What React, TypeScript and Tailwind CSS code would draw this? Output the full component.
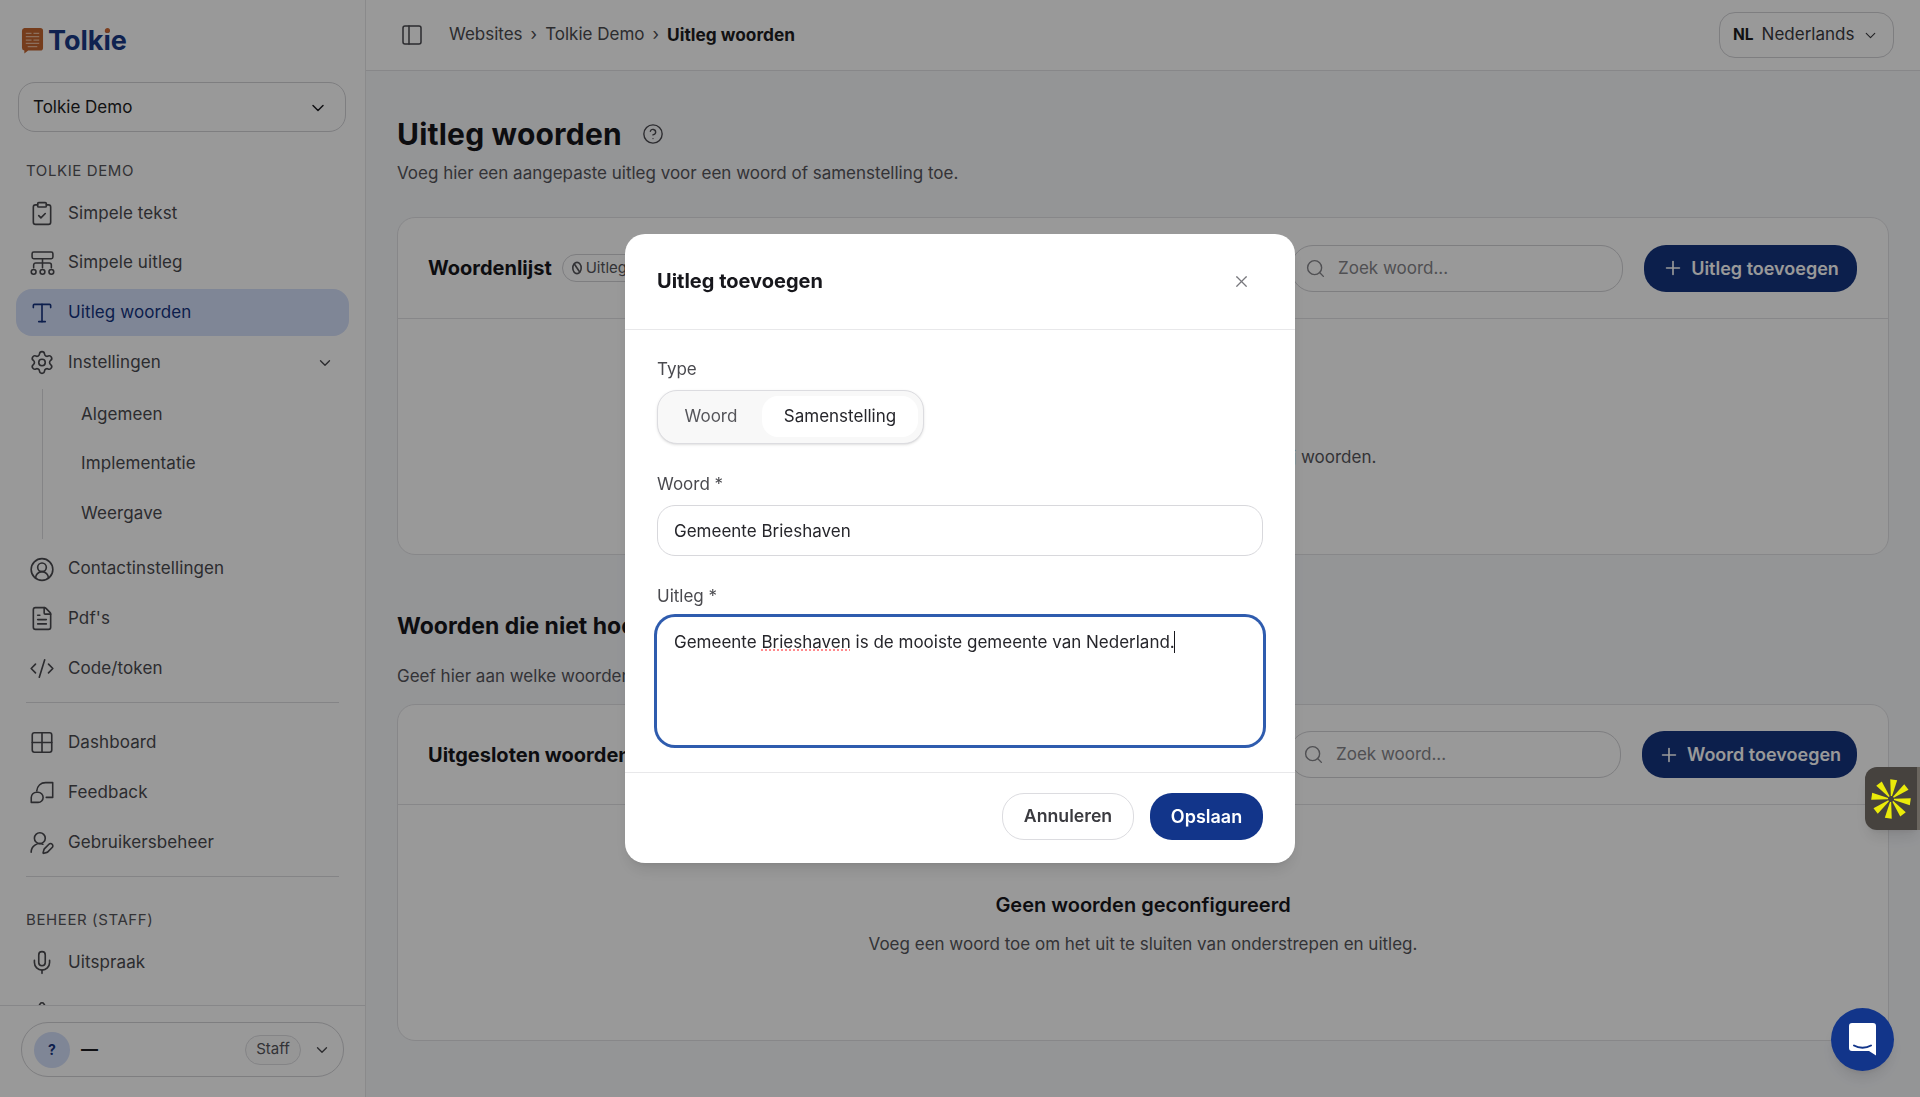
import React from "react";
import {
  ClipboardCheck, Type, Settings, ChevronDown, CircleUserRound, FileText, CodeXml, Grid2x2, UserRoundPen, Mic, PanelLeft, CircleHelp, Search, Plus, X, Triangle,
} from "lucide-react";

function Sitemap() {
  return (
    <svg width="25" height="25" viewBox="0 0 24 24" fill="none" stroke="currentColor" strokeWidth="1.5" strokeLinecap="round">
      <rect x="2" y="1" width="20" height="6.4" rx="1.6" />
      <path d="M12 7.5V16M3.5 16V13.5a2 2 0 0 1 2-2H18.5a2 2 0 0 1 2 2V16" />
      <circle cx="3.5" cy="20" r="2.3" />
      <circle cx="12" cy="20" r="2.3" />
      <circle cx="20.5" cy="20" r="2.3" />
    </svg>
  );
}

function Feedback() {
  return (
    <svg width="25" height="25" viewBox="0 0 24 24" fill="none" stroke="currentColor" strokeWidth="1.5" strokeLinecap="round" strokeLinejoin="round">
      <path d="M6.5 10.5C7 5.5 10.5 2.5 15 2.5h6.8v14.2h-6.2" />
      <path d="M1.2 21.5v-4.6a5.2 5.2 0 0 1 5.2-5.2h1.2a5 5 0 0 1 5 5v0a4.8 4.8 0 0 1-4.8 4.8z" />
    </svg>
  );
}

function Logo() {
  return (
    <svg width="23" height="27" viewBox="0 0 24 28" className="shrink-0">
      <path d="M3.5 1H20a3 3 0 0 1 3 3v17.5a3 3 0 0 1-3 3H7.5L3.5 27.5V24.5A3 3 0 0 1 1 21.5V4a3 3 0 0 1 2.5-3z" fill="#c4652f" />
      <path d="M5 6.5h6M13 6.5h6M5 10h14M5 13.5h6M13 13.5h6M5 17h14M7 20.5h10" stroke="#e9b99b" strokeWidth="1.3" />
    </svg>
  );
}

function NavItem({ icon, label, active }: { icon: React.ReactNode; label?: string; active?: boolean }) {
  return (
    <div
      className={
        "flex h-[47px] items-center rounded-[16px] pl-[13px] text-[17px] tracking-[0.1px] mb-[2.7px] " +
        (active ? "bg-[#d4dffa] text-[#15337f]" : "text-[#4a4a4f]")
      }
    >
      <span className="flex w-[26px] justify-center">{icon}</span>
      {label ? <span className="ml-[13px]">{label}</span> : null}
    </div>
  );
}

function SubItem({ label }: { label: string }) {
  return <div className="flex h-[49.6px] items-center pl-[38px] text-[17px] tracking-[0.1px] text-[#4a4a4f]">{label}</div>;
}

const I = { size: 27, strokeWidth: 1.5 };

function Sidebar() {
  return (
    <aside className="flex h-full w-[366px] shrink-0 flex-col border-r border-[#e6e6e8] bg-white">
      <div className="relative flex h-[82px] items-start pl-[21px] pt-[27px]">
        <Logo />
        <span className="ml-[4px] text-[27px] font-bold leading-[27px] text-[#1a3a86]">Tolkie</span>
        <span className="absolute left-[105px] top-[28px] h-[5px] w-[5px] rounded-full bg-[#d06a33]" />
      </div>
      <div className="mx-[18px] flex h-[50px] w-[328px] items-center justify-between rounded-[17px] border border-[#d2d2d6] pl-[14px] pr-[17px] pt-[1px] text-[17px] text-[#1d1d22]">
        <span>Tolkie Demo</span>
        <ChevronDown size={20} strokeWidth={1.8} />
      </div>
      <div className="min-h-0 flex-1 overflow-hidden px-[16px]">
        <div className="mb-[3px] mt-[28px] h-[21px] pl-[10px] text-[15px] tracking-[0.6px] leading-[21px] text-[#55555a]">TOLKIE DEMO</div>
        <div className="pt-[6px]">
          <NavItem icon={<ClipboardCheck {...I} />} label="Simpele tekst" />
          <NavItem icon={<Sitemap />} label="Simpele uitleg" />
          <NavItem icon={<Type size={28} strokeWidth={1.5} />} label="Uitleg woorden" active />
          <div className="relative">
            <NavItem icon={<Settings {...I} />} label="Instellingen" />
            <ChevronDown size={18} strokeWidth={1.8} className="absolute right-[15px] top-[15px] text-[#4a4a4f]" />
          </div>
        </div>
        <div className="ml-[26px] border-l border-[#dcdce0] pt-[1px]">
          <SubItem label="Algemeen" />
          <SubItem label="Implementatie" />
          <SubItem label="Weergave" />
        </div>
        <div className="pt-[7px]">
          <NavItem icon={<CircleUserRound {...I} />} label="Contactinstellingen" />
          <NavItem icon={<FileText {...I} />} label="Pdf's" />
          <NavItem icon={<CodeXml {...I} />} label="Code/token" />
        </div>
        <div className="mx-[10px] mb-[16.5px] mt-[10px] border-t-[1.5px] border-[#dcdce0]" />
        <NavItem icon={<Grid2x2 {...I} />} label="Dashboard" />
        <NavItem icon={<Feedback />} label="Feedback" />
        <NavItem icon={<UserRoundPen {...I} />} label="Gebruikersbeheer" />
        <div className="mx-[10px] mb-[32.5px] mt-[10px] border-t border-[#dcdce0]" />
        <div className="h-[21px] pl-[10px] text-[15px] tracking-[0.6px] leading-[21px] text-[#55555a]">BEHEER (STAFF)</div>
        <div className="mt-[9px]">
          <NavItem icon={<Mic {...I} />} label="Uitspraak" />
          <NavItem icon={<Triangle {...I} />} />
        </div>
      </div>
      <div className="h-[92px] shrink-0 border-t border-[#e2e2e5] bg-white px-[21px] pt-[16px]">
        <div className="flex h-[55px] w-[323px] items-center rounded-[27px] border border-[#d2d2d6] pl-[12px] pr-[12px]">
          <span className="flex h-[36px] w-[36px] items-center justify-center rounded-full bg-[#d4dffa] text-[14px] font-bold text-[#15337f]">?</span>
          <span className="ml-[11px] text-[17px] font-bold text-[#1d1d22]">—</span>
          <span className="ml-auto flex h-[30px] w-[56px] items-center justify-center rounded-full border border-[#dcdce0] bg-[#fafafa] text-[15px] text-[#55555a]">Staff</span>
          <ChevronDown size={18} strokeWidth={1.8} className="ml-[12px] text-[#4a4a4f]" />
        </div>
      </div>
    </aside>
  );
}

function TopBar() {
  return (
    <header className="flex h-[71px] shrink-0 items-center justify-between border-b border-[#e2e2e5] bg-white pl-[34px] pr-[26px]">
      <div className="flex items-center text-[17px] text-[#4a4a4f]">
        <PanelLeft size={24} strokeWidth={1.5} />
        <span className="ml-[25px]">Websites</span>
        <span className="mx-[8px]">›</span>
        <span>Tolkie Demo</span>
        <span className="mx-[8px]">›</span>
        <span className="text-[17.3px] font-bold text-[#1d1d22]">Uitleg woorden</span>
      </div>
      <div className="flex h-[46px] w-[175px] items-center rounded-[16px] border border-[#d2d2d6] pl-[13px] text-[17px] text-[#3a3a3f]">
        <span className="text-[15.5px] font-bold text-[#1d1d22]">NL</span>
        <span className="ml-[8px]">Nederlands</span>
        <ChevronDown size={17} strokeWidth={1.6} className="ml-[8px]" />
      </div>
    </header>
  );
}

function SearchBox({ width }: { width: string }) {
  return (
    <div className={"flex h-[47px] items-center rounded-[22px] border-[1.5px] border-[#d2d2d6] bg-white pl-[13px] text-[17px] text-[#85858a] " + width}>
      <Search size={21} strokeWidth={1.6} />
      <span className="ml-[12px] pt-[1px]">Zoek woord...</span>
    </div>
  );
}

function AddButton({ label, width }: { label: string; width: string }) {
  return (
    <div className={"flex h-[47px] items-center justify-center rounded-[22px] bg-[#15347f] text-[18px] font-semibold text-white " + width}>
      <Plus size={22} strokeWidth={1.8} />
      <span className="ml-[7px]">{label}</span>
    </div>
  );
}

function Main() {
  return (
    <main className="flex h-full min-w-0 flex-1 flex-col bg-[#f7f8fb]">
      <TopBar />
      <div className="px-[31px]">
        <div className="mt-[43px] flex h-[40px] items-center">
          <h1 className="text-[30px] font-bold leading-[40px] tracking-[0.2px] text-[#17171c]">Uitleg woorden</h1>
          <CircleHelp size={22} strokeWidth={1.5} className="ml-[20px] text-[#4a4a4f]" />
        </div>
        <p className="mt-[6px] h-[26px] text-[17px] leading-[26px] text-[#55555a]">Voeg hier een aangepaste uitleg voor een woord of samenstelling toe.</p>

        <section className="mt-[31px] h-[338px] rounded-[18px] border border-[#e2e2e5] bg-white">
          <div className="flex h-[101px] items-center border-b border-[#e2e2e5] pl-[30px] pr-[31px]">
            <h2 className="text-[20px] font-bold text-[#17171c]">Woordenlijst</h2>
            <span className="ml-[10px] flex h-[28px] items-center rounded-full border border-[#d2d2d6] px-[8px] text-[15px] text-[#55555a]">
              <svg width="12" height="14" viewBox="0 0 12 14" fill="none" stroke="currentColor" strokeWidth="1.6"><ellipse cx="6" cy="7" rx="4.2" ry="5.6" /><path d="M3 2.5 9 11.5" /></svg>
              <span className="ml-[3px]">Uitleg ingesteld</span>
            </span>
            <div className="ml-auto flex items-center gap-[21px]">
              <SearchBox width="w-[332px]" />
              <AddButton label="Uitleg toevoegen" width="w-[213px]" />
            </div>
          </div>
          <div className="flex h-[234px] flex-col items-center justify-center text-center">
            <p className="text-[17px] font-semibold leading-[28px] text-[#17171c]">Geen uitleg geconfigureerd</p>
            <p className="mt-[14px] text-[17px] leading-[26px] text-[#55555a]">Voeg een uitleg toe om de betekenis te tonen bij woorden.</p>
          </div>
        </section>

        <h2 className="mt-[55px] h-[32px] text-[23px] font-bold leading-[32px] text-[#17171c]">Woorden die niet hoeven te worden uitgelegd</h2>
        <p className="mt-[21px] h-[26px] text-[17px] leading-[26px] text-[#55555a]">Geef hier aan welke woorden niet onderstreept hoeven te worden.</p>

        <section className="mt-[15px] h-[337px] rounded-[18px] border border-[#e2e2e5] bg-white">
          <div className="flex h-[100px] items-center border-b border-[#e2e2e5] pl-[30px] pr-[31px]">
            <h2 className="text-[20px] font-bold text-[#17171c]">Uitgesloten woorden</h2>
            <div className="ml-auto flex items-center gap-[21px]">
              <SearchBox width="w-[332px]" />
              <AddButton label="Woord toevoegen" width="w-[215px]" />
            </div>
          </div>
          <div className="flex h-[234px] flex-col items-center pt-[86px] text-center">
            <p className="text-[20px] font-semibold leading-[28px] text-[#17171c]">Geen woorden geconfigureerd</p>
            <p className="mt-[12px] text-[17px] leading-[26px] text-[#55555a]">Voeg een woord toe om het uit te sluiten van onderstrepen en uitleg.</p>
          </div>
        </section>
      </div>
    </main>
  );
}

function Modal() {
  return (
    <div className="fixed inset-0 z-10 flex items-center justify-center bg-black/40 pb-[1px]">
      <div className="h-[629px] w-[670px] overflow-hidden rounded-[20px] bg-white shadow-lg">
        <div className="flex h-[96px] items-center justify-between border-b-[1.5px] border-[#e8e8ea] pl-[32px] pr-[44px]">
          <h2 className="text-[20px] font-bold text-[#17171c]">Uitleg toevoegen</h2>
          <X size={19} strokeWidth={1.5} className="text-[#77777c]" />
        </div>
        <div className="h-[443px] border-b-[1.5px] border-[#e8e8ea] px-[32px] pt-[27px]">
          <div className="h-[24px] text-[17px] leading-[24px] text-[#4a4a4f]">Type</div>
          <div className="mt-[9px] flex h-[54px] w-[267px] items-center rounded-[20px] border-[1.5px] border-[#dcdce0] bg-[#f8f8f8] pl-[7px] pr-[5px] shadow-sm">
            <span className="flex h-[41px] w-[97px] items-center justify-center pr-[5px] pt-[1px] text-[17px] text-[#55555a]">Woord</span>
            <span className="flex h-[41px] flex-1 items-center justify-center rounded-[16px] bg-white pt-[1px] text-[17px] text-[#26262b]">Samenstelling</span>
          </div>
          <div className="mt-[28px] h-[24px] text-[17px] leading-[24px] text-[#4a4a4f]">Woord *</div>
          <div className="mt-[9px] flex h-[51px] items-center rounded-[18px] border-[1.5px] border-[#d8d8dc] pl-[16px] pt-[3px] text-[17px] text-[#26262b]">Gemeente Brieshaven</div>
          <div className="mt-[28px] h-[24px] text-[17px] leading-[24px] text-[#4a4a4f]">Uitleg *</div>
          <div className="mt-[9px] h-[128px] rounded-[18px] bg-white pl-[17px] pt-[9px] text-[17px] leading-[26px] text-[#26262b] ring-[3px] ring-[#2f5cae]">
            Gemeente <span className="underline decoration-red-400 decoration-dotted underline-offset-2">Brieshaven</span> is de mooiste gemeente van Nederland.
            <span className="ml-[-1px] inline-block h-[22px] w-[1.5px] translate-y-[5px] bg-[#17171c]" />
          </div>
        </div>
        <div className="flex items-center justify-end gap-[16px] px-[32px] pt-[20px]">
          <span className="flex h-[47px] w-[132px] items-center justify-center rounded-[22px] border-[1.5px] border-[#dcdce0] bg-white text-[17.7px] font-semibold text-[#3a3a3f]">Annuleren</span>
          <span className="flex h-[47px] w-[113px] items-center justify-center rounded-[22px] bg-[#12358a] text-[18px] font-semibold text-white">Opslaan</span>
        </div>
      </div>
    </div>
  );
}

function Spark() {
  const angles = [8, 52, 98, 142, 188, 232, 278, 322];
  return (
    <svg width="40" height="40" viewBox="-20 -20 40 40">
      {angles.map((a) => (
        <polygon key={a} points="-0.6,-3 0.6,-3 3.5,-19.5 -3.5,-19.5" fill="#eaea0a" transform={`rotate(${a})`} />
      ))}
    </svg>
  );
}

function Widgets() {
  return (
    <>
      <div className="fixed right-0 top-[767px] z-20 flex h-[63px] w-[55px] items-center rounded-l-[12px] border-r-[3px] border-[#6b665f] bg-[#46423e] pl-[6px] shadow-lg">
        <Spark />
      </div>
      <div className="fixed left-[1831px] top-[1008px] z-20 flex h-[63px] w-[63px] items-center justify-center rounded-full bg-[#12358a] shadow-lg">
        <svg width="28" height="33" viewBox="0 0 28 33">
          <path d="M3 0H24a3 3 0 0 1 3 3V32.5L20 28H3a3 3 0 0 1-3-3V3a3 3 0 0 1 3-3z" fill="white" />
          <path d="M5 22.5c5 3 12 3 17 0" fill="none" stroke="#12358a" strokeWidth="2" strokeLinecap="round" />
        </svg>
      </div>
    </>
  );
}

export default function App() {
  return (
    <div className="relative flex h-[1097px] w-full overflow-hidden bg-white font-['Inter',sans-serif]">
      <Sidebar />
      <Main />
      <Modal />
      <Widgets />
    </div>
  );
}
